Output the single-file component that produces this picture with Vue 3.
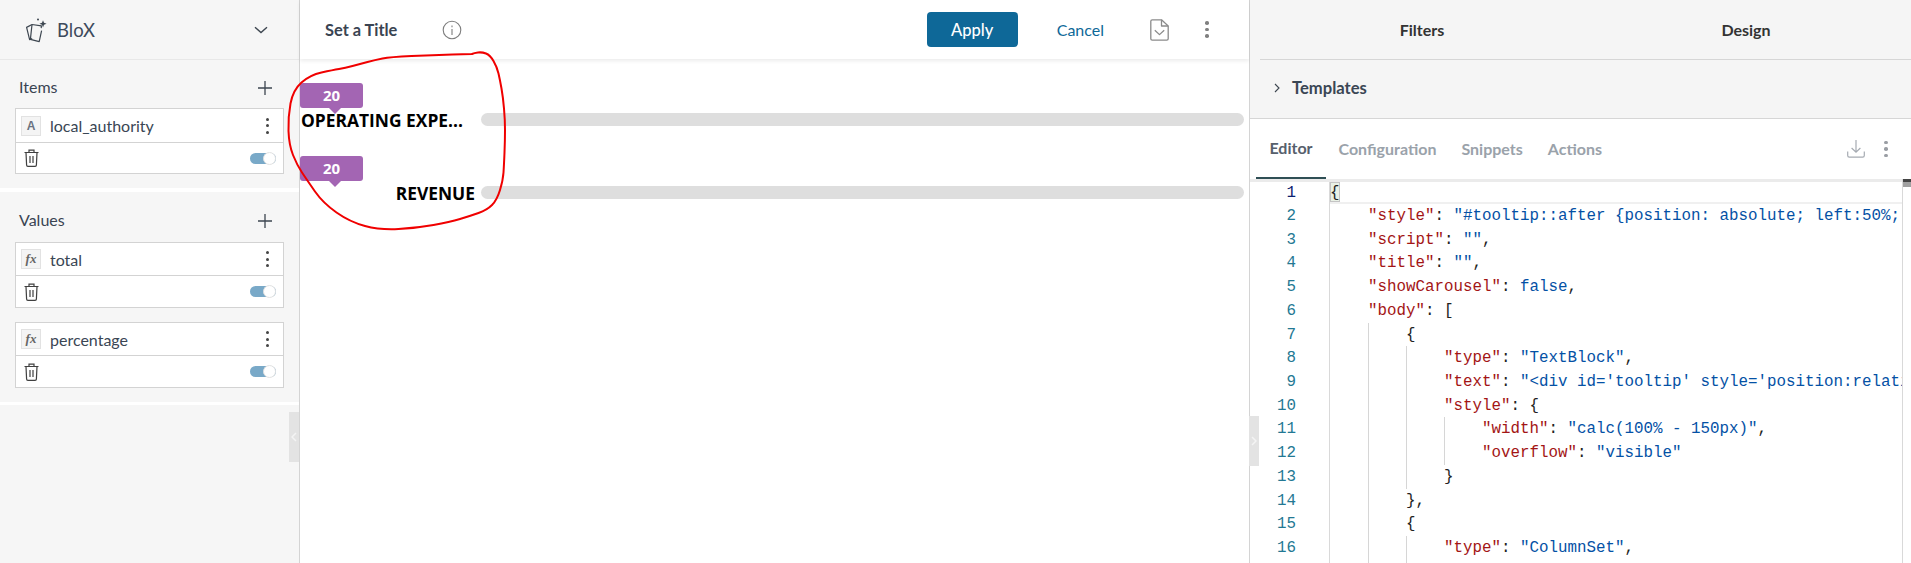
<script setup>
const K = 'k', S = 's', P = 'p', B = 'b'
const code = [
  { i: 0, t: [[P, '{']], current: true },
  { i: 1, t: [[K, '"style"'], [P, ': '], [S, '"#tooltip::after {position: absolute; left:50%;'], ] },
  { i: 1, t: [[K, '"script"'], [P, ': '], [S, '""'], [P, ',']] },
  { i: 1, t: [[K, '"title"'], [P, ': '], [S, '""'], [P, ',']] },
  { i: 1, t: [[K, '"showCarousel"'], [P, ': '], [B, 'false'], [P, ',']] },
  { i: 1, t: [[K, '"body"'], [P, ': [']] },
  { i: 2, t: [[P, '{']] },
  { i: 3, t: [[K, '"type"'], [P, ': '], [S, '"TextBlock"'], [P, ',']] },
  { i: 3, t: [[K, '"text"'], [P, ': '], [S, `"<div id='tooltip' style='position:relati`]] },
  { i: 3, t: [[K, '"style"'], [P, ': {']] },
  { i: 4, t: [[K, '"width"'], [P, ': '], [S, '"calc(100% - 150px)"'], [P, ',']] },
  { i: 4, t: [[K, '"overflow"'], [P, ': '], [S, '"visible"']] },
  { i: 3, t: [[P, '}']] },
  { i: 2, t: [[P, '},']] },
  { i: 2, t: [[P, '{']] },
  { i: 3, t: [[K, '"type"'], [P, ': '], [S, '"ColumnSet"'], [P, ',']] },
  { i: 3, t: [] }
]
const guides = (n) => Array.from({ length: Math.max(n, 0) })

const items = [{ type: 'A', name: 'local_authority' }]
const values = [{ type: 'fx', name: 'total' }, { type: 'fx', name: 'percentage' }]
const bars = ['OPERATING EXPE...', 'REVENUE']

const pts = [[472,54],[474,53],[482,52],[490,55],[497,67],[500,80],[503,97],[505,120],[505,140],[504,165],[503,180],[497,200],[487,210],[470,216],[450,222],[417,228],[380,230],[350,222],[323,203],[307,180],[297,165],[289,145],[288,117],[293,90],[310,75],[333,70],[345,68],[360,64],[375,60],[390,57],[433,55],[472,54]]
let scribble = `M${pts[0][0]} ${pts[0][1]}`
for (let i = 1; i < pts.length - 1; i++) {
  const mx = (pts[i][0] + pts[i + 1][0]) / 2
  const my = (pts[i][1] + pts[i + 1][1]) / 2
  scribble += ` Q${pts[i][0]} ${pts[i][1]} ${mx} ${my}`
}
scribble += ` L${pts[pts.length - 1][0]} ${pts[pts.length - 1][1]}`
</script>

<template>
  <div class="app">
    <aside class="left">
      <header class="brand">
        <svg class="brand-icon" width="24" height="26" viewBox="0 0 24 26" fill="none" stroke="#3d4650" stroke-width="1.2" stroke-linejoin="round">
          <path d="M8 7.5 2.6 10.4 5.6 22.6l2.6-1" />
          <path d="M8 7.5l9.4 1.4-.2 2.2M17.6 13.6l-2.4 11-8.8-2.2L8 7.5" />
          <path d="M19 3.2l1 2.6 2.6 1-2.6 1-1 2.6-1-2.6-2.6-1 2.6-1z" fill="#3d4650" stroke="none" />
          <circle cx="14" cy="2.4" r="1" fill="#3d4650" stroke="none" />
        </svg>
        <span class="brand-name">BloX</span>
        <svg class="caret" width="14" height="8" viewBox="0 0 14 8" fill="none" stroke="#3d4650" stroke-width="1.4"><path d="M1 1.2l6 5.4 6-5.4" /></svg>
      </header>

      <section class="group group-items">
        <div class="group-head">
          <span>Items</span>
          <svg width="14" height="14" viewBox="0 0 14 14" stroke="#3d4650" stroke-width="1.3"><path d="M7 0v14M0 7h14" /></svg>
        </div>
        <div v-for="f in items" :key="f.name" class="field">
          <div class="field-top">
            <span class="badge-type type-a">{{ f.type }}</span>
            <span class="field-name">{{ f.name }}</span>
            <span class="vdots"><i></i><i></i><i></i></span>
          </div>
          <div class="field-bottom">
            <svg width="15" height="18" viewBox="0 0 15 18" fill="none" stroke="#404040" stroke-width="1.2">
              <path d="M.5 3.5h14M5 3.5V1.2h5v2.3M2 3.5l.6 12.6c0 .8.5 1.3 1.3 1.3h7.2c.8 0 1.3-.5 1.3-1.3L13 3.5M6 7v7M9 7v7" />
            </svg>
            <span class="toggle"><i></i></span>
          </div>
        </div>
      </section>

      <section class="group group-values">
        <div class="group-head">
          <span>Values</span>
          <svg width="14" height="14" viewBox="0 0 14 14" stroke="#3d4650" stroke-width="1.3"><path d="M7 0v14M0 7h14" /></svg>
        </div>
        <div v-for="f in values" :key="f.name" class="field">
          <div class="field-top">
            <span class="badge-type type-fx">{{ f.type }}</span>
            <span class="field-name">{{ f.name }}</span>
            <span class="vdots"><i></i><i></i><i></i></span>
          </div>
          <div class="field-bottom">
            <svg width="15" height="18" viewBox="0 0 15 18" fill="none" stroke="#404040" stroke-width="1.2">
              <path d="M.5 3.5h14M5 3.5V1.2h5v2.3M2 3.5l.6 12.6c0 .8.5 1.3 1.3 1.3h7.2c.8 0 1.3-.5 1.3-1.3L13 3.5M6 7v7M9 7v7" />
            </svg>
            <span class="toggle"><i></i></span>
          </div>
        </div>
      </section>

      <div class="left-rest">
        <div class="handle handle-left">
          <svg width="6" height="10" viewBox="0 0 6 10" fill="none" stroke="#f4f4f4" stroke-width="1.5"><path d="M5 1 1 5l4 4" /></svg>
        </div>
      </div>
    </aside>

    <main class="center">
      <div class="toolbar">
        <span class="title">Set a Title</span>
        <svg class="info" width="20" height="20" viewBox="0 0 20 20" fill="none" stroke="#7d7d7d" stroke-width="1.1">
          <circle cx="10" cy="10" r="8.8" />
          <path d="M10 9v6M10 5.6v1.6" />
        </svg>
        <button class="apply">Apply</button>
        <span class="cancel">Cancel</span>
        <svg class="doc" width="19" height="22" viewBox="0 0 19 22" fill="none" stroke="#8b8b8b" stroke-width="1.3" stroke-linejoin="round">
          <path d="M11.5.8H2.2C1.4.8.8 1.4.8 2.2v17.6c0 .8.6 1.4 1.4 1.4h14.6c.8 0 1.4-.6 1.4-1.4V7z" />
          <path d="M11.5.8v6.2h6.7M4.8 11.2l4.7 4.4 4.7-4.4" />
        </svg>
        <span class="vdots vdots-toolbar"><i></i><i></i><i></i></span>
      </div>
      <div class="chart">
        <div v-for="b in bars" :key="b" class="chart-row">
          <div class="tip">20</div>
          <div class="bar-line">
            <span class="bar-label" :class="{ 'bar-label-left': b.endsWith('...') }">{{ b }}</span>
            <span class="bar"></span>
          </div>
        </div>
      </div>
    </main>

    <aside class="right">
      <div class="right-top">
        <div class="right-tabs">
          <span>Filters</span>
          <span>Design</span>
        </div>
      </div>
      <div class="templates">
        <svg width="6" height="10" viewBox="0 0 6 10" fill="none" stroke="#3d4650" stroke-width="1.1"><path d="M1 1l4 4-4 4" /></svg>
        <span>Templates</span>
      </div>
      <div class="editor-tabs">
        <span class="etab active">Editor</span>
        <span class="etab">Configuration</span>
        <span class="etab">Snippets</span>
        <span class="etab">Actions</span>
        <svg class="dl" width="18" height="18" viewBox="0 0 18 18" fill="none" stroke="#a6abb2" stroke-width="1.2">
          <path d="M9 0v12M4.6 8 9 12.2 13.4 8M.7 11.5v4c0 1 .6 1.6 1.6 1.6h13.4c1 0 1.6-.6 1.6-1.6v-4" />
        </svg>
        <span class="vdots vdots-light"><i></i><i></i><i></i></span>
      </div>
      <div class="editor">
        <div class="rows">
          <div v-for="(line, n) in code" :key="n" class="row" :class="{ current: line.current }">
            <span class="num" :class="{ 'num-active': line.current }">{{ line.t.length ? n + 1 : '' }}</span>
            <span class="code">
              <span class="bracket" v-if="line.current">{</span>
              <template v-else>
                <span class="indent first" v-if="line.i > 0"></span>
                <span v-for="(g, gi) in guides(line.i - 1)" :key="gi" class="indent"></span>
                <span v-for="(tok, ti) in line.t" :key="ti" :class="tok[0]">{{ tok[1] }}</span>
              </template>
            </span>
          </div>
        </div>
        <div class="scroll"><i class="s-dark"></i><i class="s-grey"></i></div>
        <div class="handle handle-right">
          <svg width="6" height="10" viewBox="0 0 6 10" fill="none" stroke="#f4f4f4" stroke-width="1.5"><path d="M1 1l4 4-4 4" /></svg>
        </div>
      </div>
    </aside>

    <svg class="scribble" width="1911" height="563" viewBox="0 0 1911 563" fill="none">
      <path :d="scribble" stroke="#f00000" stroke-width="2" stroke-linecap="round" stroke-linejoin="round" />
    </svg>
  </div>
</template>

<style>
html, body { margin: 0; overflow: hidden; background: #fff; }
</style>

<style scoped>
.app {
  position: relative;
  display: flex;
  width: 1911px;
  height: 563px;
  overflow: hidden;
  font-family: Lato, "Liberation Sans", sans-serif;
  color: #333d47;
}
.scribble { position: absolute; left: 0; top: 0; pointer-events: none; }

/* left */
.left {
  width: 300px;
  flex: none;
  display: flex;
  flex-direction: column;
  box-sizing: border-box;
  border-right: 1px solid #d4d4d4;
  background: #fff;
}
.brand {
  flex: none;
  box-sizing: border-box;
  display: flex;
  align-items: center;
  padding: 0 31px 0 24px;
  background: #f6f6f6;
  border-bottom: 1px solid #e8e8e8;
  height: 60px;
}
.brand-name { margin-left: 9px; font-size: 18.5px; color: #3d4a5c; }
.caret { margin-left: auto; }
.group { background: #f6f6f6; padding: 12px 15px; }
.group-items { height: 128px; box-sizing: border-box; margin-bottom: 4px; }
.group-values { padding-top: 13px; padding-bottom: 14px; margin-bottom: 3px; }
.group-head {
  height: 32px;
  display: flex;
  align-items: center;
  justify-content: space-between;
  padding: 0 12px 0 4px;
  margin-bottom: 4px;
  font-size: 16px;
  color: #3a4452;
}
.group-head span { padding-bottom: 3px; }
.group-values .group-head { margin-bottom: 5px; }
.field { background: #fff; border: 1px solid #d3d3d3; width: 269px; box-sizing: border-box; }
.field + .field { margin-top: 14px; }
.field-top {
  height: 32px;
  display: flex;
  align-items: center;
  padding: 0 14px 0 5px;
  border-bottom: 1px solid #d3d3d3;
}
.group-items .field-top { height: 33px; }
.badge-type {
  width: 20px;
  height: 20px;
  box-sizing: border-box;
  display: flex;
  align-items: center;
  justify-content: center;
  background: #f4f4f4;
  border: 1px solid #e2e2e2;
  color: #6a7280;
}
.type-a { font: 700 12px "Liberation Sans", sans-serif; }
.type-fx { font: italic 700 13px "Liberation Serif", serif; color: #666; }
.field-name { margin-left: 9px; font-size: 16px; color: #3a4654; }
.vdots { margin-left: auto; width: 4px; display: flex; flex-direction: column; align-items: center; gap: 3.5px; }
.vdots i { width: 3px; height: 3px; border-radius: 50%; background: #444; display: block; }
.field-bottom {
  height: 31px;
  display: flex;
  align-items: center;
  justify-content: space-between;
  padding: 0 7px 0 8px;
}
.group-items .field-bottom { height: 30px; }
.toggle { width: 26px; height: 11px; border-radius: 6px; background: #79a9c8; position: relative; display: block; }
.toggle i {
  position: absolute;
  right: 0;
  top: -1px;
  width: 13px;
  height: 13px;
  box-sizing: border-box;
  border-radius: 50%;
  background: #fff;
  border: 1px solid #e2e2e2;
}
.left-rest { flex: 1; background: #f6f6f6; position: relative; }
.handle {
  position: absolute;
  width: 10px;
  height: 50px;
  background: #e3e3e3;
  display: flex;
  align-items: center;
  justify-content: center;
}
.handle-left { right: 0; top: 7px; }
.handle-right { left: -1px; top: 237px; }

/* center */
.center {
  width: 950px;
  flex: none;
  box-sizing: border-box;
  border-right: 1px solid #d4d4d4;
  display: flex;
  flex-direction: column;
  background: #fff;
}
.toolbar {
  height: 59px;
  flex: none;
  display: flex;
  align-items: center;
  padding: 0 40px 0 25px;
  box-shadow: 0 2px 4px rgba(0, 0, 0, .08);
}
.title { font-size: 16.4px; font-weight: 700; color: #3a4452; }
.info { margin-left: 45px; }
.apply {
  margin-left: auto;
  width: 91px;
  height: 35px;
  border: 0;
  border-radius: 4px;
  background: #0e6898;
  color: #fff;
  font: 500 16.5px Lato, sans-serif;
  padding: 0;
}
.cancel { margin-left: 39px; font-size: 16px; color: #0e6898; }
.doc { margin-left: 46px; }
.vdots-toolbar { margin-left: 36px; gap: 3px; }
.vdots-toolbar i { background: #808080; width: 3.5px; height: 3.5px; }
.chart { padding-top: 24px; }
.chart-row { margin-bottom: 25px; }
.tip {
  position: relative;
  width: 63px;
  height: 25px;
  border-radius: 3px;
  background: #a365b3;
  color: #fff;
  font: 700 15px/25px "Open Sans", sans-serif;
  text-align: center;
}
.tip::after {
  content: "";
  position: absolute;
  left: 29px;
  top: 25px;
  border: 6px solid transparent;
  border-bottom-width: 0;
  border-top-color: #a365b3;
}
.bar-line { height: 23px; display: flex; align-items: center; }
.bar-label {
  width: 175px;
  flex: none;
  box-sizing: border-box;
  padding: 2px 0 0 1px;
  font: 700 17.4px/25px "Open Sans", sans-serif;
  color: #000;
  text-align: right;
  white-space: nowrap;
}
.bar-label-left { text-align: left; }
.bar { flex: 1; height: 13px; margin: 0 5px 0 6px; border-radius: 7px; background: #dedede; }

/* right */
.right { flex: 1; min-width: 0; display: flex; flex-direction: column; background: #fff; }
.right-top { background: #f5f5f5; padding-left: 10px; height: 60px; box-sizing: border-box; }
.right-tabs {
  height: 60px;
  box-sizing: border-box;
  display: grid;
  grid-template-columns: 324px 324px;
  align-items: center;
  justify-items: center;
  border-bottom: 1px solid #d6d6d6;
  font-size: 16px;
  font-weight: 700;
  color: #333;
}
.templates {
  height: 59px;
  box-sizing: border-box;
  display: flex;
  align-items: center;
  gap: 12px;
  padding: 0 0 2px 24px;
  background: #f5f5f5;
  border-bottom: 1px solid #d6d6d6;
  font-size: 16.6px;
  font-weight: 700;
  color: #3a4654;
}
.editor-tabs {
  height: 60px;
  flex: none;
  box-sizing: border-box;
  display: flex;
  align-items: center;
  padding: 0 23px 0 6px;
  position: relative;
}
.etab { padding: 0 12.5px; font-size: 16px; font-weight: 700; color: #9aa2aa; line-height: 60px; }
.etab.active { color: #56606c; border-bottom: 2px solid #2f4f55; line-height: 58px; height: 58px; width: 45px; text-align: center; }
.dl { margin-left: auto; }
.vdots-light { margin-left: 19px; gap: 3px; }
.vdots-light i { background: #9a9ea4; width: 3.5px; height: 3.5px; }
.editor { flex: 1; min-height: 0; display: flex; position: relative; }
.rows {
  flex: 1;
  min-width: 0;
  overflow: hidden;
  border-top: 3px solid #ebebeb;
}
.row {
  display: flex;
  height: 23.72px;
  font: 15.83px/25.5px "Liberation Mono", monospace;
}
.row.current { height: 22px; line-height: 23px; }
.num {
  width: 80px;
  flex: none;
  box-sizing: border-box;
  padding-right: 33px;
  text-align: right;
  color: #237893;
  border-right: 1px solid #d9d9d9;
}
.num-active { color: #0b216f; }
.code { flex: 1; min-width: 0; display: flex; white-space: pre; overflow: hidden; }
.row.current .code { border-bottom: 2px solid #f0f0f0; }
.bracket {
  width: 10px;
  box-sizing: border-box;
  background: #e9f1e6;
  outline: 1px solid #c4c4c4;
  outline-offset: -1px;
  color: #222;
}
.indent { flex: none; width: 38px; box-sizing: border-box; border-left: 1px solid #d6d6d6; height: 24px; }
.indent.first { border-left: 0; }
.k { color: #a31515; }
.s, .b { color: #0451a5; }
.p { color: #222; }
.scroll {
  width: 8px;
  flex: none;
  border-left: 1px solid #d9d9d9;
  display: flex;
  flex-direction: column;
}
.s-dark { height: 3px; background: #444; display: block; }
.s-grey { height: 5px; background: #a0a0a0; display: block; }
</style>
